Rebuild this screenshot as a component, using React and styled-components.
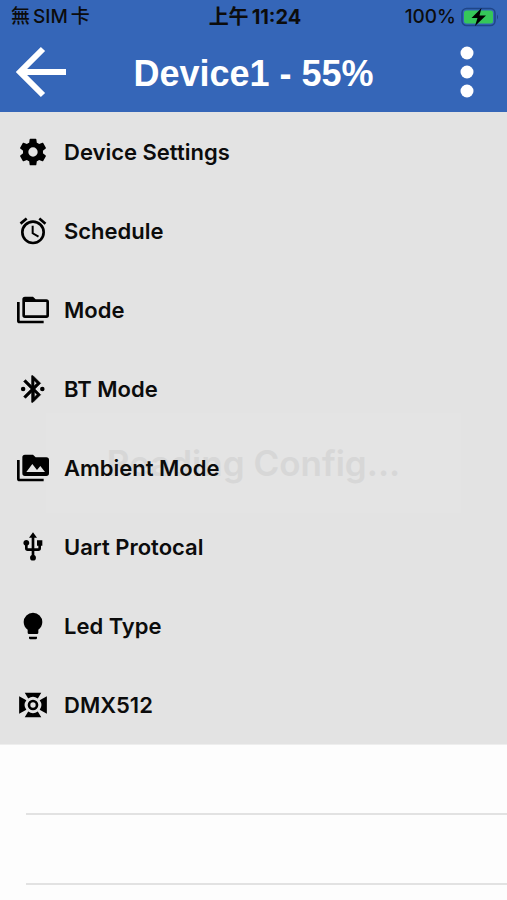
import React from 'react'
import styled, { createGlobalStyle, ThemeProvider } from 'styled-components';

const theme = {
  cPrimary: '#3566b8',
  cMenu: '#e3e3e3',
  cPage: '#fdfdfd',
  cLine: '#e2e2e2',
  cInk: '#0c0c0c',
  cGhost: '#d7d7d7',
};

const GlobalStyle = createGlobalStyle`
  * {
    box-sizing: border-box;
  }

  body {
    margin: 0;
    background: ${({ theme }) => theme.cPage};
    color: ${({ theme }) => theme.cInk};
    font-family: Inter, 'Noto Sans CJK TC', sans-serif;
  }

  button {
    border: 0;
    padding: 0;
    background: none;
    color: inherit;
    font: inherit;
    cursor: pointer;
  }
`;

const Screen = styled.div`
  position: relative;
  min-height: 100vh;
  overflow: hidden;
`;

const TopBar = styled.header`
  background: ${({ theme }) => theme.cPrimary};
`;

const StatusBar = styled.div`
  display: grid;
  grid-template-columns: 1fr auto 1fr;
  align-items: center;
  height: 34px;
  padding: 0 8px 0 11px;
  font-size: 19px;
  font-weight: 500;
  line-height: 24px;
`;

const Carrier = styled.div`
  display: flex;
  gap: 3px;
`;

const Clock = styled.time`
  display: flex;
  gap: 3px;
  font-size: 20px;
  font-weight: 700;
`;

const BatteryGroup = styled.div`
  display: flex;
  justify-content: flex-end;
  align-items: center;
  gap: 5px;
`;

const NavBar = styled.div`
  display: grid;
  grid-template-columns: 52px 1fr 52px;
  align-items: center;
  height: 78px;
  padding: 0 14px 2px;
  color: #fff;
`;

const NavButton = styled.button`
  display: flex;
  justify-content: center;
  height: 52px;
`;

const Title = styled.h1`
  margin: 0;
  padding-top: 4px;
  font-family: 'Liberation Sans', Arial, sans-serif;
  font-size: 36px;
  font-weight: 700;
  line-height: 44px;
  text-align: center;
  white-space: nowrap;
`;

const Menu = styled.ul`
  margin: 0;
  padding: 0;
  border-bottom: 1px solid #eee;
  background: ${({ theme }) => theme.cMenu};
  list-style: none;
`;

const MenuButton = styled.button`
  position: relative;
  z-index: 2;
  display: flex;
  align-items: center;
  gap: 15px;
  width: 100%;
  height: 79px;
  padding: 0 17px;
  font-size: 22px;
  font-weight: 600;
  line-height: 28px;
  text-align: left;
`;

const EmptyRow = styled.div`
  height: 70px;
  margin-left: 26px;
  border-bottom: 2px solid ${({ theme }) => theme.cLine};
`;

const Toast = styled.div`
  position: absolute;
  top: 50%;
  left: 50%;
  z-index: 1;
  display: flex;
  align-items: center;
  justify-content: center;
  width: 82%;
  height: 100px;
  margin-top: -37px;
  transform: translateX(-50%);
  background: #e4e4e4;
  color: ${({ theme }) => theme.cGhost};
  font-size: 35px;
  font-weight: 600;
`;

const Glyph = ({ children }) => (
  <svg width='32' height='32' viewBox='0 0 24 24' fill='#000' fillRule='evenodd' aria-hidden='true'>
    {children}
  </svg>
);

const CogIcon = () => (
  <Glyph>
    <path d='M12,15.5A3.5,3.5 0 0,1 8.5,12A3.5,3.5 0 0,1 12,8.5A3.5,3.5 0 0,1 15.5,12A3.5,3.5 0 0,1 12,15.5M19.43,12.97C19.47,12.65 19.5,12.33 19.5,12C19.5,11.67 19.47,11.34 19.43,11L21.54,9.37C21.73,9.22 21.78,8.95 21.66,8.73L19.66,5.27C19.54,5.05 19.27,4.96 19.05,5.05L16.56,6.05C16.04,5.66 15.5,5.32 14.87,5.07L14.5,2.42C14.46,2.18 14.25,2 14,2H10C9.75,2 9.54,2.18 9.5,2.42L9.13,5.07C8.5,5.32 7.96,5.66 7.44,6.05L4.95,5.05C4.73,4.96 4.46,5.05 4.34,5.27L2.34,8.73C2.21,8.95 2.27,9.22 2.46,9.37L4.57,11C4.53,11.34 4.5,11.67 4.5,12C4.5,12.33 4.53,12.65 4.57,12.97L2.46,14.63C2.27,14.78 2.21,15.05 2.34,15.27L4.34,18.73C4.46,18.95 4.73,19.03 4.95,18.95L7.44,17.94C7.96,18.34 8.5,18.68 9.13,18.93L9.5,21.58C9.54,21.82 9.75,22 10,22H14C14.25,22 14.46,21.82 14.5,21.58L14.87,18.93C15.5,18.67 16.04,18.34 16.56,17.94L19.05,18.95C19.27,19.03 19.54,18.95 19.66,18.73L21.66,15.27C21.78,15.05 21.73,14.78 21.54,14.63L19.43,12.97Z' />
  </Glyph>
);

const AlarmIcon = () => (
  <Glyph>
    <path d='M12,20A7,7 0 0,1 5,13A7,7 0 0,1 12,6A7,7 0 0,1 19,13A7,7 0 0,1 12,20M12,4A9,9 0 0,0 3,13A9,9 0 0,0 12,22A9,9 0 0,0 21,13A9,9 0 0,0 12,4M12.5,8H11V14L15.75,16.85L16.5,15.62L12.5,13.25V8M7.88,3.39L6.6,1.86L2,5.71L3.29,7.24L7.88,3.39M22,5.72L17.4,1.86L16.11,3.39L20.71,7.25L22,5.72Z' />
  </Glyph>
);

const FoldersIcon = () => (
  <Glyph>
    <path d='M22,4A2,2 0 0,1 24,6V16A2,2 0 0,1 22,18H6A2,2 0 0,1 4,16V4A2,2 0 0,1 6,2H12L14,4H22M2,6V20H20V22H2A2,2 0 0,1 0,20V6H2M6,6V16H22V6H6Z' />
  </Glyph>
);

const BluetoothIcon = () => (
  <Glyph>
    <path
      stroke='#000'
      strokeWidth='0.5'
      d='M14.88,16.29L13,18.17V14.41M13,5.83L14.88,7.71L13,9.58M17.71,7.71L12,2H11V9.58L6.41,5L5,6.41L10.59,12L5,17.58L6.41,19L11,14.41V22H12L17.71,16.29L13.41,12Z'
    />
    <circle cx='4.6' cy='12' r='1.7' />
    <circle cx='19' cy='12' r='1.7' />
  </Glyph>
);

const PicturesIcon = () => (
  <Glyph>
    <path d='M7,15L11.5,9L15,13.5L17.5,10.5L21,15M22,4H14L12,2H6A2,2 0 0,0 4,4V16A2,2 0 0,0 6,18H22A2,2 0 0,0 24,16V6A2,2 0 0,0 22,4M2,6H0V20A2,2 0 0,0 2,22H20V20H2V6Z' />
  </Glyph>
);

const UsbIcon = () => (
  <Glyph>
    <path d='M15,7V11H16V13H13V5H15L12,1L9,5H11V13H8V10.93C8.7,10.56 9.2,9.85 9.2,9C9.2,7.78 8.21,6.8 7,6.8C5.78,6.8 4.8,7.78 4.8,9C4.8,9.85 5.3,10.56 6,10.93V13A2,2 0 0,0 8,15H11V18.05C10.29,18.41 9.8,19.15 9.8,20A2.2,2.2 0 0,0 12,22.2A2.2,2.2 0 0,0 14.2,20C14.2,19.15 13.71,18.41 13,18.05V15H16A2,2 0 0,0 18,13V11H19V7H15Z' />
  </Glyph>
);

const BulbIcon = () => (
  <Glyph>
    <path d='M12,2A7,7 0 0,0 5,9C5,11.38 6.19,13.47 8,14.74V17A1,1 0 0,0 9,18H15A1,1 0 0,0 16,17V14.74C17.81,13.47 19,11.38 19,9A7,7 0 0,0 12,2M9,21A1,1 0 0,0 10,22H14A1,1 0 0,0 15,21V20H9V21Z' />
  </Glyph>
);

// stage light with four barn doors
const StageLightIcon = () => (
  <Glyph>
    <path d='M5.8,2.8H18.2L15.6,7.2A6,6 0 0,0 8.4,7.2ZM5.8,21.2H18.2L15.6,16.8A6,6 0 0,1 8.4,16.8ZM1.6,5.4L7,8.4A6,6 0 0,0 7,15.6L1.6,18.6ZM22.4,5.4L17,8.4A6,6 0 0,1 17,15.6L22.4,18.6Z' />
    <circle cx='12' cy='12' r='3' fill='none' stroke='#000' strokeWidth='2' />
  </Glyph>
);

const BackIcon = () => (
  <svg width='52' height='52' viewBox='0 0 52 52' fill='none' stroke='#fff' strokeWidth='6' aria-hidden='true'>
    <path d='M52,26H6M29,3L6,26L29,49' />
  </svg>
);

const MoreIcon = () => (
  <svg width='14' height='52' viewBox='0 0 14 52' fill='#fff' aria-hidden='true'>
    <circle cx='7' cy='7' r='6.5' />
    <circle cx='7' cy='26' r='6.5' />
    <circle cx='7' cy='45' r='6.5' />
  </svg>
);

const BatteryIcon = () => (
  <svg width='38' height='20' viewBox='0 0 38 20' aria-hidden='true'>
    <rect x='1' y='1.5' width='33' height='17' rx='4.5' fill='none' stroke='#1f4688' strokeWidth='1.5' />
    <rect x='3' y='3.5' width='29' height='13' rx='2.5' fill='#35c759' />
    <path d='M36,7.5Q38,10 36,12.5Z' fill='#1f4688' />
    <path d='M20.5,1L10.5,11H16.5L14,19L25,8.5H18.5Z' fill='#000' />
  </svg>
);

const menuItems = [
  { name: 'Device Settings', Icon: CogIcon },
  { name: 'Schedule', Icon: AlarmIcon },
  { name: 'Mode', Icon: FoldersIcon },
  { name: 'BT Mode', Icon: BluetoothIcon },
  { name: 'Ambient Mode', Icon: PicturesIcon },
  { name: 'Uart Protocal', Icon: UsbIcon },
  { name: 'Led Type', Icon: BulbIcon },
  { name: 'DMX512', Icon: StageLightIcon },
];

const App = () => (
  <ThemeProvider theme={theme}>
    <GlobalStyle />
    <Screen>
      <TopBar>
        <StatusBar>
          <Carrier>
            <span>無</span>
            <span>SIM</span>
            <span>卡</span>
          </Carrier>
          <Clock>
            <span>上午</span>
            <span>11:24</span>
          </Clock>
          <BatteryGroup>
            100%
            <BatteryIcon />
          </BatteryGroup>
        </StatusBar>
        <NavBar>
          <NavButton aria-label='Back'><BackIcon /></NavButton>
          <Title>Device1 - 55%</Title>
          <NavButton aria-label='More'><MoreIcon /></NavButton>
        </NavBar>
      </TopBar>
      <Menu>
        {menuItems.map(({ name, Icon }) => (
          <li key={name}>
            <MenuButton>
              <Icon />
              {name}
            </MenuButton>
          </li>
        ))}
      </Menu>
      <EmptyRow />
      <EmptyRow />
      <Toast role='status'>Reading Config...</Toast>
    </Screen>
  </ThemeProvider>
)

export default App
